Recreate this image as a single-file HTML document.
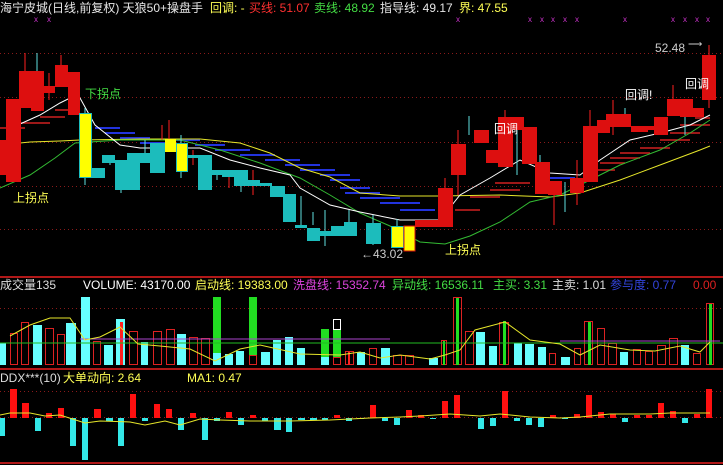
<!DOCTYPE html>
<html><head><meta charset="utf-8"><style>
html,body{margin:0;padding:0;background:#000;width:723px;height:465px;overflow:hidden}
svg{display:block}
text{font-family:"Liberation Sans","Noto Sans CJK SC",sans-serif;font-size:12px}
</style></head><body>
<svg width="723" height="465" viewBox="0 0 723 465" xmlns="http://www.w3.org/2000/svg">
<rect width="723" height="465" fill="#000"/>
<!-- header -->
<text x="0" y="12" fill="#e6e6e6">海宁皮城(日线,前复权) 天狼50+操盘手</text>
<text x="210" y="12" fill="#ffff55">回调: -</text>
<text x="249" y="12" fill="#ff3030">买线: 51.07</text>
<text x="314" y="12" fill="#44dd44">卖线: 48.92</text>
<text x="380" y="12" fill="#e6e6e6">指导线: 49.17</text>
<text x="459" y="12" fill="#ffff55">界: 47.55</text>
<g fill="#cc33cc" font-size="8"><text x="34" y="22" style="font-size:8px">x</text><text x="47" y="22" style="font-size:8px">x</text>
<text x="456" y="22" style="font-size:8px">x</text><text x="528" y="22" style="font-size:8px">x</text><text x="540" y="22" style="font-size:8px">x</text><text x="551" y="22" style="font-size:8px">x</text><text x="563" y="22" style="font-size:8px">x</text><text x="575" y="22" style="font-size:8px">x</text><text x="623" y="22" style="font-size:8px">x</text><text x="671" y="22" style="font-size:8px">x</text><text x="683" y="22" style="font-size:8px">x</text><text x="695" y="22" style="font-size:8px">x</text><text x="706" y="22" style="font-size:8px">x</text></g>
<!-- grid -->
<g stroke="#8a1a1a" stroke-dasharray="1,3" stroke-width="1">
<line x1="0" y1="53.5" x2="723" y2="53.5"/><line x1="0" y1="97.5" x2="723" y2="97.5"/><line x1="0" y1="142.5" x2="723" y2="142.5"/><line x1="0" y1="186.5" x2="723" y2="186.5"/><line x1="0" y1="229.5" x2="723" y2="229.5"/>
<line x1="0" y1="308.5" x2="723" y2="308.5"/><line x1="0" y1="391.5" x2="723" y2="391.5"/><line x1="0" y1="417.5" x2="723" y2="417.5"/>
</g>
<g stroke="#b01818" stroke-width="2"><line x1="0" y1="277" x2="723" y2="277"/><line x1="0" y1="369" x2="723" y2="369"/><line x1="0" y1="463" x2="723" y2="463"/></g>
<!-- blue dashes -->
<g stroke="#2233dd" stroke-width="2">
<line x1="95" y1="128" x2="120" y2="128"/><line x1="105" y1="133" x2="135" y2="133"/><line x1="120" y1="138" x2="150" y2="138"/><line x1="140" y1="143" x2="170" y2="143"/><line x1="170" y1="140" x2="200" y2="140"/><line x1="195" y1="145" x2="225" y2="145"/><line x1="215" y1="150" x2="250" y2="150"/><line x1="240" y1="155" x2="275" y2="155"/><line x1="265" y1="160" x2="300" y2="160"/><line x1="285" y1="165" x2="320" y2="165"/><line x1="300" y1="170" x2="335" y2="170"/><line x1="320" y1="175" x2="350" y2="175"/><line x1="330" y1="180" x2="360" y2="180"/><line x1="340" y1="188" x2="370" y2="188"/><line x1="345" y1="193" x2="380" y2="193"/><line x1="360" y1="198" x2="400" y2="198"/><line x1="380" y1="203" x2="420" y2="203"/><line x1="400" y1="210" x2="435" y2="210"/><line x1="550" y1="178" x2="575" y2="178"/>
</g>
<!-- red dashes -->
<g stroke="#d02020" stroke-width="1.5">
<line x1="0" y1="128" x2="25" y2="128"/><line x1="20" y1="123" x2="50" y2="123"/><line x1="40" y1="117" x2="65" y2="117"/><line x1="55" y1="110" x2="75" y2="110"/>
<line x1="455" y1="210" x2="480" y2="210"/><line x1="470" y1="197" x2="500" y2="197"/><line x1="490" y1="190" x2="520" y2="190"/><line x1="495" y1="183" x2="530" y2="183"/><line x1="590" y1="170" x2="615" y2="170"/><line x1="600" y1="163" x2="625" y2="163"/><line x1="610" y1="158" x2="640" y2="158"/><line x1="620" y1="153" x2="650" y2="153"/><line x1="640" y1="148" x2="670" y2="148"/><line x1="660" y1="140" x2="690" y2="140"/><line x1="670" y1="133" x2="700" y2="133"/><line x1="680" y1="125" x2="710" y2="125"/><line x1="695" y1="118" x2="710" y2="118"/>
</g>
<!-- MA lines -->
<polyline fill="none" stroke="#e6e62a" stroke-width="1" points="0,145 30,142 60,141 80,140 140,139 200,139 240,143 270,153 300,168 330,177 360,193 400,196 440,196 500,195 550,197 580,193 620,180 660,165 700,150 710,146"/>
<polyline fill="none" stroke="#33bb33" stroke-width="1" points="0,188 30,175 55,158 75,143 120,140 180,140 220,150 260,163 300,178 330,195 360,213 390,226 420,242 445,244 470,236 500,222 530,202 560,195 590,180 620,165 660,150 690,133 710,120"/>
<polyline fill="none" stroke="#ffffff" stroke-width="1" points="20,124 40,115 60,103 70,98 80,98 95,125 120,145 140,148 200,148 230,160 260,168 290,175 300,188 330,205 360,212 400,220 440,220 460,195 490,178 520,160 550,173 580,175 600,160 630,140 660,133 690,125 710,115"/>
<!-- wicks -->
<g stroke="#ff2020" stroke-width="1">
<line x1="25" y1="53" x2="25" y2="73"/><line x1="61" y1="55" x2="61" y2="65"/><line x1="49" y1="73" x2="49" y2="100"/><line x1="169" y1="120" x2="169" y2="139"/><line x1="162" y1="125" x2="162" y2="140"/><line x1="193" y1="150" x2="193" y2="165"/><line x1="229" y1="170" x2="229" y2="188"/><line x1="253" y1="170" x2="253" y2="195"/>
<line x1="458" y1="130" x2="458" y2="195"/><line x1="505" y1="110" x2="505" y2="117"/><line x1="554" y1="195" x2="554" y2="225"/><line x1="577" y1="160" x2="577" y2="205"/><line x1="590" y1="110" x2="590" y2="126"/><line x1="613" y1="100" x2="613" y2="135"/><line x1="673" y1="85" x2="673" y2="99"/><line x1="709" y1="45" x2="709" y2="108"/><line x1="445" y1="178" x2="445" y2="190"/>
</g>
<g stroke="#60e0e0" stroke-width="1">
<line x1="37" y1="53" x2="37" y2="73"/><line x1="85" y1="108" x2="85" y2="185"/><line x1="110" y1="155" x2="110" y2="165"/><line x1="121" y1="190" x2="121" y2="193"/><line x1="145" y1="140" x2="145" y2="153"/><line x1="181" y1="135" x2="181" y2="178"/><line x1="217" y1="172" x2="217" y2="180"/><line x1="241" y1="185" x2="241" y2="192"/><line x1="301" y1="196" x2="301" y2="228"/><line x1="313" y1="212" x2="313" y2="225"/><line x1="325" y1="210" x2="325" y2="246"/><line x1="349" y1="210" x2="349" y2="222"/><line x1="373" y1="215" x2="373" y2="245"/><line x1="397" y1="219" x2="397" y2="232"/>
<line x1="469" y1="116" x2="469" y2="135"/><line x1="517" y1="120" x2="517" y2="175"/><line x1="540" y1="155" x2="540" y2="165"/><line x1="565" y1="182" x2="565" y2="212"/><line x1="625" y1="108" x2="625" y2="114"/><line x1="685" y1="117" x2="685" y2="135"/>
</g>
<!-- candles red -->
<g fill="#dd0f0f">
<rect x="0" y="140" width="6" height="35"/><rect x="6" y="99" width="15" height="83"/><rect x="19" y="71" width="13" height="37"/><rect x="31" y="71" width="13" height="40"/><rect x="44" y="86" width="11" height="7"/><rect x="55" y="65" width="13" height="22"/><rect x="68" y="72" width="12" height="43"/>
<rect x="415" y="220" width="23" height="7"/><rect x="438" y="188" width="15" height="39"/><rect x="451" y="144" width="15" height="31"/><rect x="474" y="130" width="15" height="13"/><rect x="486" y="150" width="14" height="13"/><rect x="498" y="117" width="15" height="50"/><rect x="512" y="117" width="12" height="13"/><rect x="522" y="127" width="15" height="37"/><rect x="535" y="162" width="15" height="32"/><rect x="548" y="181" width="14" height="14"/><rect x="570" y="178" width="14" height="15"/><rect x="583" y="126" width="15" height="56"/><rect x="597" y="120" width="13" height="13"/><rect x="606" y="114" width="25" height="13"/><rect x="631" y="126" width="17" height="6"/><rect x="648" y="126" width="12" height="4"/><rect x="654" y="117" width="14" height="18"/><rect x="667" y="99" width="13" height="17"/><rect x="680" y="99" width="13" height="18"/><rect x="690" y="108" width="14" height="9"/><rect x="702" y="55" width="14" height="45"/>
</g>
<!-- cyan candles -->
<g fill="#1cbcbc">
<rect x="92" y="168" width="13" height="10"/><rect x="102" y="155" width="13" height="8"/><rect x="115" y="160" width="13" height="30"/><rect x="127" y="153" width="13" height="37"/><rect x="140" y="153" width="12" height="10"/><rect x="150" y="143" width="15" height="30"/><rect x="188" y="155" width="12" height="3"/><rect x="198" y="155" width="14" height="35"/><rect x="212" y="170" width="11" height="5"/><rect x="222" y="170" width="12" height="7"/><rect x="234" y="170" width="14" height="16"/><rect x="248" y="180" width="12" height="6"/><rect x="258" y="183" width="14" height="3"/><rect x="270" y="186" width="15" height="11"/><rect x="283" y="194" width="13" height="28"/><rect x="295" y="225" width="12" height="3"/><rect x="307" y="228" width="13" height="13"/><rect x="320" y="231" width="13" height="5"/><rect x="331" y="226" width="13" height="10"/><rect x="344" y="222" width="13" height="14"/><rect x="366" y="223" width="15" height="21"/>
</g>
<g fill="#ffff00" stroke="#1cbcbc" stroke-width="1">
<rect x="79.5" y="113.5" width="12" height="64"/><rect x="176.5" y="143.5" width="11" height="28"/><rect x="391.5" y="226.5" width="12" height="21"/>
</g>
<rect x="165" y="139" width="11" height="13" fill="#ffff00"/>
<rect x="404" y="226" width="11" height="25" fill="#ffff00" stroke="#dd0f0f"/>
<!-- annotations -->
<text x="85" y="98" fill="#44dd44">下拐点</text>
<text x="13" y="202" fill="#ffff55">上拐点</text>
<text x="445" y="254" fill="#ffff55">上拐点</text>
<text x="361" y="258" fill="#cccccc">←43.02</text>
<text x="655" y="52" fill="#cccccc">52.48</text>
<text x="688" y="47" fill="#cccccc" style="font-size:10px">⟶</text>
<text x="625" y="99" fill="#ffffff">回调!</text>
<text x="685" y="88" fill="#ffffff">回调</text>
<text x="494" y="133" fill="#ffffff">回调</text>
<!-- volume panel -->
<text x="0" y="289" fill="#dddddd">成交量135</text>
<text x="83" y="289" fill="#ffffff">VOLUME: 43170.00</text>
<text x="195" y="289" fill="#ffff55">启动线: 19383.00</text>
<text x="293" y="289" fill="#dd44dd">洗盘线: 15352.74</text>
<text x="392" y="289" fill="#44dd44">异动线: 16536.11</text>
<text x="493" y="289" fill="#44dd44">主买: 3.31</text>
<text x="552" y="289" fill="#dddddd">主卖: 1.01</text>
<text x="610" y="289" fill="#3344dd">参与度: 0.77</text>
<text x="693" y="289" fill="#dd2020">0.00</text>
<g fill="#66ffff">
<rect x="0" y="343" width="6" height="22"/><rect x="33" y="325" width="9" height="40"/><rect x="66" y="323" width="10" height="42"/><rect x="81" y="297" width="9" height="68"/><rect x="104" y="345" width="9" height="20"/><rect x="116" y="319" width="9" height="46"/><rect x="141" y="342" width="7" height="23"/><rect x="177" y="334" width="9" height="31"/><rect x="213" y="353" width="8" height="12"/><rect x="225" y="354" width="8" height="11"/><rect x="236" y="351" width="8" height="14"/><rect x="261" y="352" width="9" height="13"/><rect x="273" y="340" width="8" height="25"/><rect x="285" y="337" width="8" height="28"/><rect x="297" y="348" width="8" height="17"/><rect x="321" y="357" width="8" height="8"/><rect x="357" y="352" width="8" height="13"/><rect x="381" y="348" width="9" height="17"/><rect x="429" y="358" width="9" height="7"/><rect x="476" y="332" width="9" height="33"/><rect x="489" y="346" width="8" height="19"/><rect x="514" y="343" width="8" height="22"/><rect x="525" y="344" width="9" height="21"/><rect x="538" y="347" width="8" height="18"/><rect x="561" y="357" width="9" height="8"/><rect x="620" y="352" width="8" height="13"/><rect x="681" y="345" width="8" height="20"/>
</g>
<g fill="none" stroke="#dd2222" stroke-width="1">
<rect x="10.5" y="333.5" width="7" height="31"/><rect x="21.5" y="322.5" width="7" height="42"/><rect x="45.5" y="328.5" width="8" height="36"/><rect x="57.5" y="334.5" width="7" height="30"/><rect x="93.5" y="341.5" width="7" height="23"/><rect x="129.5" y="331.5" width="8" height="33"/><rect x="153.5" y="331.5" width="8" height="33"/><rect x="166.5" y="329.5" width="8" height="35"/><rect x="189.5" y="337.5" width="8" height="27"/><rect x="201.5" y="338.5" width="8" height="26"/><rect x="249.5" y="355.5" width="7" height="9"/><rect x="333.5" y="357.5" width="7" height="7"/><rect x="345.5" y="351.5" width="8" height="13"/><rect x="369.5" y="348.5" width="7" height="16"/><rect x="393.5" y="355.5" width="8" height="9"/><rect x="405.5" y="355.5" width="8" height="9"/><rect x="441.5" y="340.5" width="5" height="24"/><rect x="453.5" y="297.5" width="8" height="67"/><rect x="465.5" y="331.5" width="8" height="33"/><rect x="499.5" y="322.5" width="9" height="42"/><rect x="549.5" y="353.5" width="6" height="11"/><rect x="574.5" y="348.5" width="6" height="16"/><rect x="584.5" y="321.5" width="8" height="43"/><rect x="597.5" y="328.5" width="7" height="36"/><rect x="608.5" y="343.5" width="8" height="21"/><rect x="633.5" y="349.5" width="7" height="15"/><rect x="645.5" y="351.5" width="7" height="13"/><rect x="657.5" y="345.5" width="8" height="19"/><rect x="669.5" y="338.5" width="8" height="26"/><rect x="693.5" y="353.5" width="7" height="11"/><rect x="706.5" y="303.5" width="7" height="61"/>
</g>
<g fill="#22dd22">
<rect x="213" y="297" width="8" height="56"/><rect x="249" y="297" width="8" height="58"/><rect x="321" y="329" width="8" height="28"/><rect x="333" y="329" width="8" height="28"/><rect x="443" y="341" width="2" height="24"/><rect x="456" y="298" width="3" height="67"/><rect x="503" y="321" width="3" height="44"/><rect x="588" y="322" width="3" height="43"/><rect x="709" y="304" width="3" height="61"/>
</g>
<rect x="120" y="322" width="3" height="43" fill="#ff2020"/><rect x="348" y="352" width="2" height="13" fill="#ff2020"/>
<rect x="333.5" y="319.5" width="7" height="10" fill="none" stroke="#fff"/>
<line x1="0" y1="343" x2="723" y2="343" stroke="#22bb22"/>
<line x1="80" y1="339" x2="390" y2="339" stroke="#aa44cc"/>
<line x1="560" y1="341" x2="720" y2="341" stroke="#aa44cc"/>
<polyline fill="none" stroke="#e6e62a" points="10,336 30,325 50,318 70,318 85,340 100,337 120,327 138,344 160,346 190,349 215,361 240,349 260,345 300,354 340,355 360,352 380,358 400,355 430,359 445,355 460,350 475,330 505,322 530,340 560,344 580,355 600,345 630,350 655,351 680,346 700,352 710,342"/>
<!-- DDX panel -->
<text x="0" y="382" fill="#dddddd">DDX***(10)</text>
<text x="63" y="382" fill="#ffff55">大单动向: 2.64</text>
<text x="187" y="382" fill="#ffff55">MA1: 0.47</text>
<g fill="#ff1010">
<rect x="10" y="389" width="7" height="29"/><rect x="22" y="403" width="7" height="15"/><rect x="46" y="413" width="6" height="5"/><rect x="58" y="408" width="6" height="10"/><rect x="94" y="409" width="7" height="9"/><rect x="130" y="394" width="6" height="24"/><rect x="154" y="404" width="6" height="14"/><rect x="166" y="409" width="6" height="9"/><rect x="190" y="413" width="6" height="5"/><rect x="226" y="412" width="6" height="6"/><rect x="250" y="415" width="6" height="3"/><rect x="334" y="415" width="6" height="3"/><rect x="370" y="405" width="6" height="13"/><rect x="406" y="410" width="6" height="8"/><rect x="418" y="415" width="6" height="3"/><rect x="442" y="401" width="6" height="17"/><rect x="454" y="395" width="6" height="23"/><rect x="502" y="391" width="6" height="27"/><rect x="550" y="415" width="6" height="3"/><rect x="574" y="414" width="6" height="4"/><rect x="586" y="395" width="6" height="23"/><rect x="598" y="412" width="6" height="6"/><rect x="610" y="414" width="6" height="4"/><rect x="634" y="415" width="6" height="3"/><rect x="646" y="415" width="6" height="3"/><rect x="658" y="403" width="6" height="15"/><rect x="670" y="411" width="6" height="7"/><rect x="694" y="414" width="6" height="4"/><rect x="706" y="389" width="6" height="29"/>
</g>
<g fill="#33e8e8">
<rect x="0" y="418" width="5" height="18"/><rect x="35" y="418" width="6" height="13"/><rect x="70" y="418" width="6" height="28"/><rect x="82" y="418" width="6" height="42"/><rect x="106" y="418" width="7" height="3"/><rect x="118" y="418" width="6" height="28"/><rect x="142" y="418" width="6" height="3"/><rect x="178" y="418" width="6" height="12"/><rect x="202" y="418" width="6" height="22"/><rect x="214" y="418" width="6" height="3"/><rect x="238" y="418" width="6" height="7"/><rect x="262" y="418" width="6" height="3"/><rect x="274" y="418" width="7" height="12"/><rect x="286" y="418" width="6" height="14"/><rect x="298" y="418" width="7" height="2"/><rect x="310" y="418" width="7" height="2"/><rect x="322" y="418" width="6" height="2"/><rect x="346" y="418" width="6" height="3"/><rect x="357" y="418" width="7" height="1"/><rect x="382" y="418" width="6" height="3"/><rect x="394" y="418" width="6" height="7"/><rect x="430" y="418" width="6" height="1"/><rect x="478" y="418" width="6" height="11"/><rect x="490" y="418" width="6" height="8"/><rect x="514" y="418" width="6" height="3"/><rect x="526" y="418" width="6" height="7"/><rect x="538" y="418" width="6" height="9"/><rect x="562" y="418" width="6" height="1"/><rect x="622" y="418" width="6" height="4"/><rect x="682" y="418" width="6" height="5"/>
</g>
<polyline fill="none" stroke="#e6e62a" points="0,415 10,413 30,413 45,416 60,415 85,423 100,421 130,422 145,425 165,421 180,425 200,419 220,420 250,421 290,421 330,420 370,418 400,417 420,416 450,414 480,416 500,414 530,417 560,418 580,417 610,414 650,414 670,413 710,413"/>
</svg>
</body></html>
